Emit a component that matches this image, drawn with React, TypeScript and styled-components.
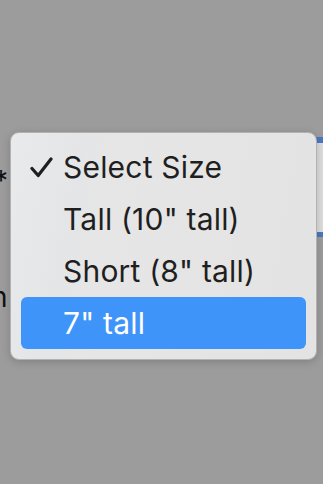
import React from "react";
import styled, { createGlobalStyle } from "styled-components";

const Global = createGlobalStyle`
  html, body { margin: 0; padding: 0; }
  body {
    background: #9c9c9c;
    font-family: Inter, "Noto Sans", "Liberation Sans", sans-serif;
    overflow: hidden;
  }
`;

const Stage = styled.div`
  position: relative;
  width: 323px;
  height: 484px;
  overflow: hidden;
  background: #9c9c9c;
`;

const Page = styled.div`
  display: flex;
  flex-direction: column;
  padding-top: 137px;
`;

const FieldRow = styled.div`
  display: flex;
  justify-content: space-between;
  align-items: flex-start;
  height: 100px;
`;

const Asterisk = styled.span`
  margin-top: 30px;
  margin-left: -6px;
  font-size: 28px;
  line-height: 28px;
  color: #111;
`;

const SelectBox = styled.div`
  width: 7px;
  height: 89px;
  border-top: 6px solid #4a78c2;
  border-bottom: 5px solid #4a78c2;
  background: #dcdcdc;
`;

const TextRow = styled.div`
  display: flex;
  justify-content: space-between;
  margin-top: 45px;
  font-size: 28px;
  line-height: 30px;
  color: #111;
`;

const ClipLeft = styled.span`
  margin-left: -9px;
`;

const ClipRight = styled.span`
  margin-right: -12px;
`;

const Menu = styled.div`
  position: absolute;
  left: 10px;
  top: 132px;
  width: 307px;
  box-sizing: border-box;
  padding: 8px 10px 10px;
  border-radius: 9px;
  background: linear-gradient(100deg, #e9eaec 0%, #e4e5e7 22%, #e6e6e6 30%, #e3e3e3 100%);
  border: 1px solid #b2b2b2;
  box-shadow: 0 2px 8px rgba(0, 0, 0, 0.18);
  display: flex;
  flex-direction: column;
`;

const Item = styled.div<{ $active?: boolean }>`
  display: flex;
  align-items: center;
  height: 52px;
  border-radius: 6px;
  background: ${(p) => (p.$active ? "#3f94fa" : "transparent")};
  color: ${(p) => (p.$active ? "#ffffff" : "#1f1f1f")};
  font-size: 30px;
  letter-spacing: 0.2px;
`;

const CheckSlot = styled.span`
  width: 42px;
  display: flex;
  justify-content: flex-end;
  padding-right: 10px;
  box-sizing: border-box;
  flex-shrink: 0;
`;

const Label = styled.span`
  white-space: nowrap;
`;

const Check = () => (
  <svg width="23" height="21" viewBox="0 0 23 21" fill="none">
    <path
      d="M2 11.5 L8.2 18.5 L21 2"
      stroke="#1f1f1f"
      strokeWidth="3.2"
      strokeLinecap="round"
      strokeLinejoin="round"
    />
  </svg>
);

const items = [
  { label: "Select Size", checked: true },
  { label: 'Tall (10" tall)' },
  { label: 'Short (8" tall)' },
  { label: '7" tall', active: true },
];

export default function App() {
  return (
    <Stage>
      <Global />
      <Page>
        <FieldRow>
          <Asterisk>*</Asterisk>
          <SelectBox />
        </FieldRow>
        <TextRow>
          <ClipLeft>n</ClipLeft>
          <ClipRight>r</ClipRight>
        </TextRow>
      </Page>
      <Menu>
        {items.map((it) => (
          <Item key={it.label} $active={it.active}>
            <CheckSlot>{it.checked ? <Check /> : null}</CheckSlot>
            <Label>{it.label}</Label>
          </Item>
        ))}
      </Menu>
    </Stage>
  );
}
